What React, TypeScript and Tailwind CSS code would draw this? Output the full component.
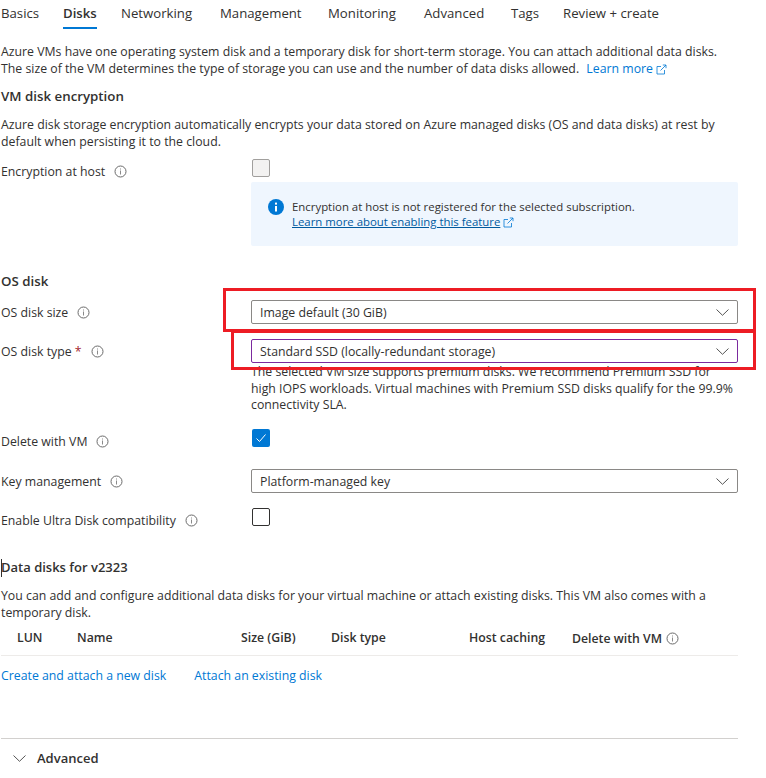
const tabs = [
  { name: "Basics", width: "w-[62px]" },
  { name: "Disks", width: "w-[58px]" },
  { name: "Networking", width: "w-[99px]" },
  { name: "Management", width: "w-[108px]" },
  { name: "Monitoring", width: "w-[96px]" },
  { name: "Advanced", width: "w-[87px]" },
  { name: "Tags", width: "w-[52px]" },
  { name: "Review + create", width: "w-[110px]" },
];

function InfoIcon() {
  return (
    <svg width="13" height="13" viewBox="0 0 13 13" className="shrink-0">
      <circle cx="6.5" cy="6.5" r="5.5" fill="none" stroke="#6b6b6b" strokeWidth="1" />
      <rect x="6" y="5.5" width="1" height="4" fill="#8a8a8a" />
      <rect x="6" y="3.5" width="1" height="1" fill="#8a8a8a" />
    </svg>
  );
}

function ExternalIcon({ color }: { color: string }) {
  return (
    <svg width="11" height="11" viewBox="0 0 11 11" fill="none" stroke={color} strokeWidth="0.8" className="inline-block">
      <path d="M5 2.5H1v7.5h7.5V6" />
      <path d="M4.5 6.5 10 1M6.8 1H10v3.2" />
    </svg>
  );
}

function Chevron() {
  return (
    <svg width="13" height="7" viewBox="0 0 13 7" fill="none" stroke="#555" strokeWidth="1" className="shrink-0">
      <path d="M0.5 0.5 6.5 6.3 12.5 0.5" />
    </svg>
  );
}

function Label({ text, required }: { text: string; required?: boolean }) {
  return (
    <div className="flex items-center gap-[9px]">
      <span>
        {text}
        {required && <span className="text-[#a4262c]"> *</span>}
      </span>
      <InfoIcon />
    </div>
  );
}

function Select({ value, purple }: { value: string; purple?: boolean }) {
  return (
    <div
      className={`h-[24px] w-[487px] flex items-center justify-between pl-[8px] pr-[8px] bg-white border rounded-[2px] ${
        purple ? "border-[#7b2a9e]" : "border-[#8a8886]"
      }`}
    >
      <span>{value}</span>
      <Chevron />
    </div>
  );
}

function App() {
  return (
    <div className="relative w-[766px] h-[778px] overflow-hidden bg-white pl-[1px] font-['Open_Sans','Noto_Sans',sans-serif] text-[12.3px] leading-[17px] text-[#323130]">
      <div className="flex h-[29px] text-[13.2px]">
        {tabs.map((t) => (
          <div key={t.name} className={`${t.width} h-[29px] pt-[5px]`}>
            <span
              className={`inline-block h-[24px] whitespace-nowrap ${
                t.name === "Disks" ? "font-semibold border-b-[2px] border-[#0078d4]" : ""
              }`}
            >
              {t.name}
            </span>
          </div>
        ))}
      </div>

      <p className="mt-[14px] w-[750px]">
        Azure VMs have one operating system disk and a temporary disk for short-term storage. You can attach additional data disks.
        <br />
        The size of the VM determines the type of storage you can use and the number of data disks allowed.{" "}
        <span className="ml-[4px] text-[#0078d4]">Learn more</span> <ExternalIcon color="#0078d4" />
      </p>

      <h2 className="mt-[11px] font-semibold text-[13.3px]">VM disk encryption</h2>

      <p className="mt-[11px] w-[750px]">
        Azure disk storage encryption automatically encrypts your data stored on Azure managed disks (OS and data disks) at rest by
        <br />
        default when persisting it to the cloud.
      </p>

      <div className="mt-[9px] flex">
        <div className="w-[250px] pt-[4px]">
          <Label text="Encryption at host" />
        </div>
        <div>
          <div className="ml-[1px] w-[18px] h-[18px] bg-[#f3f2f1] border border-[#a19f9d] rounded-[2px]" />
          <div className="mt-[5px] w-[487px] h-[64px] bg-[#eff6fe] rounded-[2px] flex items-center pl-[17px] gap-[8px]">
            <svg width="16" height="16" viewBox="0 0 16 16" className="shrink-0 -mt-[14px]">
              <circle cx="8" cy="8" r="8" fill="#0078d4" />
              <rect x="7" y="7" width="2" height="5.5" fill="#fff" />
              <rect x="7" y="3.6" width="2" height="2" fill="#fff" />
            </svg>
            <div className="text-[11.4px] leading-[15px] -mt-[1px]">
              <p>Encryption at host is not registered for the selected subscription.</p>
              <p>
                <span className="underline text-[#005a9e]">Learn more about enabling this feature</span>{" "}
                <ExternalIcon color="#0078d4" />
              </p>
            </div>
          </div>
        </div>
      </div>

      <h2 className="mt-[27px] font-semibold text-[13.3px]">OS disk</h2>

      <div className="mt-[10px] flex items-center">
        <div className="w-[250px]">
          <Label text="OS disk size" />
        </div>
        <Select value="Image default (30 GiB)" />
      </div>

      <div className="mt-[15px] flex items-center">
        <div className="w-[250px]">
          <Label text="OS disk type" required />
        </div>
        <Select value="Standard SSD (locally-redundant storage)" purple />
      </div>

      <p className="ml-[250px] mt-[1px] w-[487px] leading-[16.7px]">
        The selected VM size supports premium disks. We recommend Premium SSD for
        <br />
        high IOPS workloads. Virtual machines with Premium SSD disks qualify for the 99.9%
        <br />
        connectivity SLA.
      </p>

      <div className="mt-[15px] flex items-start">
        <div className="w-[251px] h-[18px] pt-[4px]">
          <Label text="Delete with VM" />
        </div>
        <div className="w-[18px] h-[18px] bg-[#0078d4] rounded-[2px] flex items-center justify-center">
          <svg width="12" height="12" viewBox="0 0 12 12" fill="none" stroke="#fff" strokeWidth="1">
            <path d="M1.5 6.5 4.5 9.5 10.5 2.5" />
          </svg>
        </div>
      </div>

      <div className="mt-[22px] flex items-center">
        <div className="w-[250px]">
          <Label text="Key management" />
        </div>
        <Select value="Platform-managed key" />
      </div>

      <div className="mt-[15px] flex items-start">
        <div className="w-[251px] h-[18px] pt-[4px]">
          <Label text="Enable Ultra Disk compatibility" />
        </div>
        <div className="w-[18px] h-[18px] bg-white border border-[#323130] rounded-[2px]" />
      </div>

      <h2 className="mt-[33px] font-semibold text-[13px] relative">
        <span className="absolute -left-[0.5px] -top-[0.5px] w-[1px] h-[18px] bg-[#323130]" />
        Data disks for v2323
      </h2>

      <p className="mt-[11px] w-[730px]">
        You can add and configure additional data disks for your virtual machine or attach existing disks. This VM also comes with a temporary disk.
      </p>

      <div className="mt-[8px] w-[737px] h-[27px] border-b border-[#edebe9] flex font-semibold">
        <span className="w-[60px] pl-[16px]">LUN</span>
        <span className="w-[180px] pl-[16px]">Name</span>
        <span className="w-[90px]">Size (GiB)</span>
        <span className="w-[138px]">Disk type</span>
        <span className="w-[103px]">Host caching</span>
        <span className="flex items-center gap-[4px] h-[18px]">
          Delete with VM <InfoIcon />
        </span>
      </div>

      <div className="mt-[11px] flex gap-[28px] text-[#0078d4]">
        <span>Create and attach a new disk</span>
        <span>Attach an existing disk</span>
      </div>

      <div className="mt-[54px] w-[737px] border-t border-[#d2d0ce] pt-[11px] flex items-center font-semibold text-[13px]">
        <span className="ml-[12px] flex"><Chevron /></span>
        <span className="ml-[11px]">Advanced</span>
      </div>

      {/* annotations on top of the screenshot */}
      <div className="absolute left-[223px] top-[288px] w-[533px] h-[44px] border-[3px] border-[#ed1c24]" />
      <div className="absolute left-[231px] top-[330px] w-[525px] h-[40px] border-[3px] border-[#ed1c24]" />
    </div>
  );
}

export default App;
